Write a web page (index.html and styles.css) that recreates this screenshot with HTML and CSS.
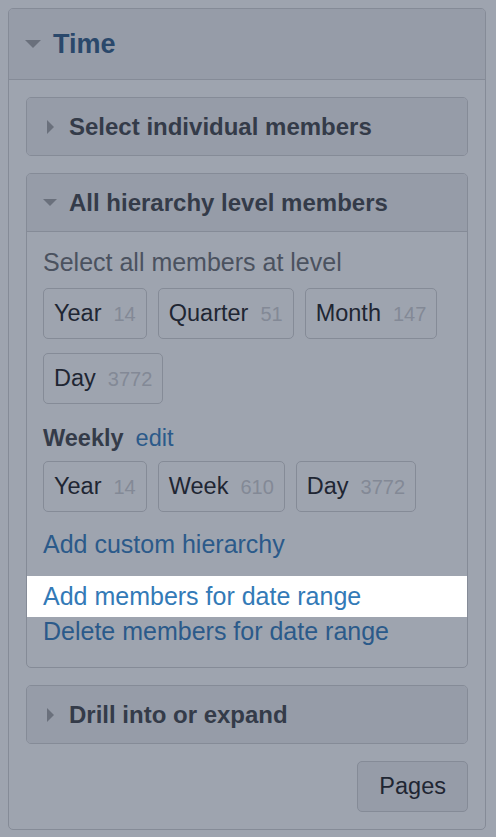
FILE: index.html
```html
<!DOCTYPE html>
<html lang="en">
<head>
<meta charset="utf-8">
<title>Time</title>
<link rel="stylesheet" href="styles.css">
</head>
<body>
<div class="panel">
  <div class="panel-head">
    <svg class="caret-lg" width="16" height="8" viewBox="0 0 16 8"><polygon points="0,0 16,0 8,8"/></svg>
    <span class="panel-title">Time</span>
  </div>
  <div class="panel-body">
    <div class="section collapsed">
      <div class="section-head">
        <span class="caret"><svg width="7" height="14" viewBox="0 0 7 14"><polygon points="0,0 7,7 0,14"/></svg></span>
        <span>Select individual members</span>
      </div>
    </div>

    <div class="section">
      <div class="section-head">
        <span class="caret"><svg width="14" height="7" viewBox="0 0 14 7"><polygon points="0,0 14,0 7,7"/></svg></span>
        <span>All hierarchy level members</span>
      </div>
      <div class="section-body">
        <div class="hint">Select all members at level</div>
        <div class="chips">
          <span class="chip"><span class="chip-label">Year</span><span class="chip-count">14</span></span>
          <span class="chip"><span class="chip-label">Quarter</span><span class="chip-count">51</span></span>
          <span class="chip"><span class="chip-label">Month</span><span class="chip-count">147</span></span>
          <span class="chip"><span class="chip-label">Day</span><span class="chip-count">3772</span></span>
        </div>
        <div class="hier-title"><span class="hier-name">Weekly</span><a class="link-sm" href="#">edit</a></div>
        <div class="chips chips-weekly">
          <span class="chip"><span class="chip-label">Year</span><span class="chip-count">14</span></span>
          <span class="chip"><span class="chip-label">Week</span><span class="chip-count">610</span></span>
          <span class="chip"><span class="chip-label">Day</span><span class="chip-count">3772</span></span>
        </div>
        <a class="link link-custom" href="#">Add custom hierarchy</a>
        <a class="link link-highlight" href="#">Add members for date range</a>
        <a class="link" href="#">Delete members for date range</a>
      </div>
    </div>

    <div class="section collapsed">
      <div class="section-head">
        <span class="caret"><svg width="7" height="14" viewBox="0 0 7 14"><polygon points="0,0 7,7 0,14"/></svg></span>
        <span>Drill into or expand</span>
      </div>
    </div>

    <div class="footer"><span class="btn">Pages</span></div>
  </div>
</div>
</body>
</html>
```

FILE: styles.css
```css
html, body {
  margin: 0;
}
body {
  padding: 8px 10px 8px 8px;
  background: #9ea4af;
  font-family: "Liberation Sans", Arial, sans-serif;
}
.panel {
  width: 478px;
  box-sizing: border-box;
  border: 1px solid #858b97;
  border-radius: 5px;
  overflow: hidden;
}
.panel-head {
  display: flex;
  align-items: center;
  gap: 12px;
  height: 71px;
  box-sizing: border-box;
  padding: 0 16px;
  background: #969ca8;
  border-bottom: 1px solid #858b97;
}
.caret-lg { fill: #6a707c; display: block; }
.panel-title {
  font-weight: 700;
  font-size: 27px;
  color: #2a486b;
}
.panel-body {
  display: flex;
  flex-direction: column;
  gap: 17px;
  padding: 17px;
}
.section {
  border: 1px solid #858b97;
  border-radius: 5px;
  overflow: hidden;
}
.section-head {
  display: flex;
  align-items: center;
  gap: 12px;
  height: 57px;
  padding: 0 16px;
  background: #969ca8;
  font-weight: 700;
  font-size: 24px;
  color: #343b49;
}
.section:not(.collapsed) .section-head {
  height: 58px;
  box-sizing: border-box;
  border-bottom: 1px solid #858b97;
}
.caret {
  width: 14px;
  display: flex;
  justify-content: center;
  fill: #6a707c;
}
.caret svg { display: block; }
.section-body {
  padding: 13px 16px 18px;
}
.hint {
  font-size: 25px;
  line-height: 35px;
  color: #4b525f;
}
.chips {
  display: flex;
  flex-wrap: wrap;
  gap: 14px 11px;
  margin-top: 8px;
}
.chip {
  display: flex;
  align-items: baseline;
  height: 51px;
  box-sizing: border-box;
  padding: 0 10px;
  border: 1px solid #858b97;
  border-radius: 5px;
  line-height: 49px;
  font-size: 23.5px;
  color: #1f2633;
}
.chip-count {
  margin-left: 12px;
  font-size: 20px;
  color: #838996;
}
.hier-title {
  margin-top: 18px;
  line-height: 33px;
  font-size: 23.5px;
}
.hier-name {
  font-weight: 700;
  color: #343b49;
}
.link-sm {
  margin-left: 12px;
  color: #2b5a8a;
  text-decoration: none;
}
.chips-weekly {
  margin-top: 6px;
}
.link {
  display: block;
  font-size: 25px;
  line-height: 35px;
  color: #2b5a8a;
  text-decoration: none;
}
.link-custom {
  margin-top: 15px;
  margin-bottom: 17px;
}
.link-highlight {
  position: relative;
  z-index: 0;
  color: #337ab7;
}
.link-highlight::before {
  content: "";
  position: absolute;
  top: -3px;
  bottom: -3px;
  left: -16px;
  right: -16px;
  background: #ffffff;
  z-index: -1;
}
.footer {
  display: flex;
  justify-content: flex-end;
}
.btn {
  display: block;
  height: 51px;
  box-sizing: border-box;
  padding: 0 21px;
  border: 1px solid #858b97;
  border-radius: 5px;
  line-height: 49px;
  font-size: 23.5px;
  color: #1f2633;
  background: #969ca8;
}
```
